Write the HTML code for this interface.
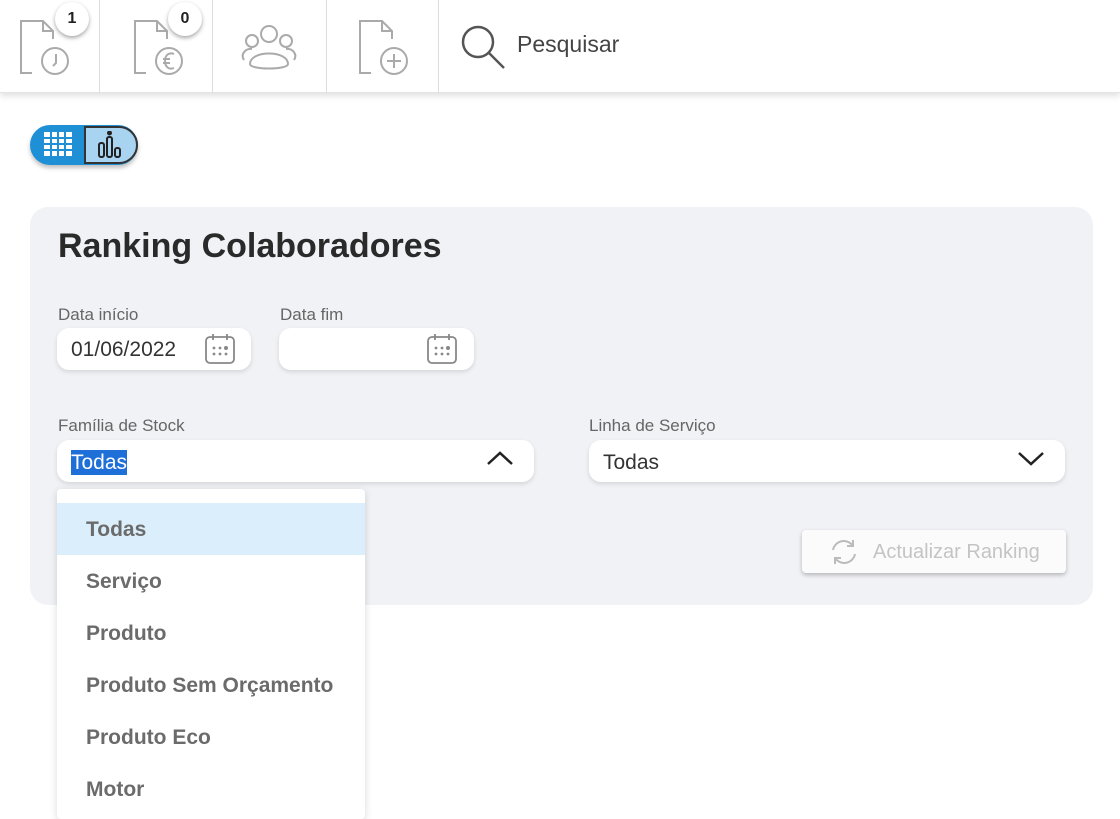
<!DOCTYPE html>
<html><head><meta charset="utf-8"><style>
*{box-sizing:border-box;margin:0;padding:0}
body{width:1120px;height:810px;overflow:hidden;background:#fff;font-family:"Liberation Sans",sans-serif;position:relative}
.hdr{position:absolute;left:0;top:0;width:1120px;height:93px;background:#fff;box-shadow:0 3px 6px rgba(0,0,0,.12);border-bottom:1px solid #e4e4e8}
.div{position:absolute;top:0;width:1px;height:93px;background:#ddd}
.badge{position:absolute;width:34px;height:34px;border-radius:50%;background:#fff;box-shadow:0 2px 4px rgba(0,0,0,.35);font-weight:bold;font-size:16px;text-align:center;line-height:34px;color:#222}
.abs{position:absolute}
.card{position:absolute;left:30px;top:207px;width:1063px;height:398px;background:#f1f2f6;border-radius:18px}
.lbl{position:absolute;font-size:17px;color:#666}
.inp{position:absolute;background:#fff;border-radius:12px;box-shadow:0 2px 5px rgba(0,0,0,.12)}
.dd{position:absolute;left:57px;top:489px;width:308px;height:330px;background:#fff;box-shadow:0 2px 8px rgba(0,0,0,.15);border-radius:4px}
.it{height:52px;line-height:54px;padding-left:29px;font-size:21px;font-weight:bold;color:#6b6b6b}
</style></head><body>
<div class="hdr">
 <div class="div" style="left:99px"></div><div class="div" style="left:212px"></div><div class="div" style="left:326px"></div><div class="div" style="left:438px"></div>
 <svg class="abs" style="left:18px;top:18px" width="60" height="60" fill="none" stroke="#aaa" stroke-width="2">
  <path d="M14 55H3V3h22l10 10v8"/><path d="M25 3v10h10"/><circle cx="37" cy="43" r="13"/><path d="M38 36v9l-3 3"/></svg>
 <div class="badge" style="left:55px;top:2px">1</div>
 <svg class="abs" style="left:132px;top:18px" width="60" height="60" fill="none" stroke="#aaa" stroke-width="2">
  <path d="M14 55H3V3h22l10 10v8"/><path d="M25 3v10h10"/><circle cx="37" cy="43" r="13"/><path d="M42 36c-5-2-9 1-9 7s4 9 9 7M31 41h7M31 45h7"/></svg>
 <div class="badge" style="left:168px;top:2px">0</div>
 <svg class="abs" style="left:238px;top:22px" width="62" height="50" fill="none" stroke="#aaa" stroke-width="2">
  <circle cx="31" cy="12" r="8"/><circle cx="14" cy="19" r="6"/><circle cx="48" cy="19" r="6"/><path d="M12 42c0-14 38-14 38 0c0 6-38 6-38 0z"/><path d="M6 38c-4-6 2-12 8-11M56 38c4-6-2-12-8-11"/></svg>
 <svg class="abs" style="left:357px;top:18px" width="60" height="60" fill="none" stroke="#aaa" stroke-width="2">
  <path d="M14 55H3V3h22l10 10v8"/><path d="M25 3v10h10"/><circle cx="37" cy="43" r="13"/><path d="M37 36v14M30 43h14"/></svg>
 <svg class="abs" style="left:458px;top:22px" width="50" height="50" fill="none" stroke="#555" stroke-width="2.5"><circle cx="20" cy="20" r="15"/><path d="M31 31l15 15"/></svg>
 <div class="abs" style="left:517px;top:31px;font-size:23px;color:#444">Pesquisar</div>
</div>
<div class="abs" style="left:30px;top:125px;width:108px;height:40px;border-radius:20px;background:#1f8fd6;box-shadow:0 3px 4px rgba(0,0,0,.25)"></div>
<div class="abs" style="left:84px;top:126px;width:54px;height:38px;border-radius:0 19px 19px 0;background:#a8d4f2;border:2px solid #333"></div>
<svg class="abs" style="left:43px;top:131px" width="30" height="26"><rect x="1" y="1" width="28" height="24" fill="#fff"/><g stroke="#1f8fd6" stroke-width="2"><path d="M1 7h28M1 13h28M1 19h28M8 1v24M15 1v24M22 1v24"/></g></svg>
<svg class="abs" style="left:96px;top:131px" width="28" height="28" fill="none" stroke="#222" stroke-width="2"><rect x="3" y="12" width="5" height="14" rx="2"/><rect x="11" y="6" width="5" height="20" rx="2"/><rect x="19" y="17" width="5" height="9" rx="2"/><circle cx="13.5" cy="2" r="1.5" fill="#222"/></svg>
<div class="card"></div>
<div class="abs" style="left:58px;top:227px;font-size:34px;font-weight:bold;color:#2a2a2a">Ranking Colaboradores</div>
<div class="lbl" style="left:58px;top:305px">Data início</div>
<div class="lbl" style="left:280px;top:305px">Data fim</div>
<div class="inp" style="left:57px;top:328px;width:194px;height:42px"></div>
<div class="abs" style="left:71px;top:338px;font-size:21px;color:#333">01/06/2022</div>
<div class="inp" style="left:279px;top:328px;width:195px;height:42px"></div>
<svg class="abs" style="left:204px;top:333px" width="32" height="32" fill="none" stroke="#888" stroke-width="1.8"><rect x="2" y="4" width="28" height="26" rx="4"/><path d="M9 1v6M23 1v6"/><g fill="#888" stroke="none"><circle cx="10" cy="15" r="1.4"/><circle cx="16" cy="15" r="1.4"/><circle cx="22" cy="15" r="2"/><circle cx="10" cy="21" r="1.4"/><circle cx="16" cy="21" r="1.4"/><circle cx="22" cy="21" r="1.4"/></g></svg>
<svg class="abs" style="left:426px;top:333px" width="32" height="32" fill="none" stroke="#888" stroke-width="1.8"><rect x="2" y="4" width="28" height="26" rx="4"/><path d="M9 1v6M23 1v6"/><g fill="#888" stroke="none"><circle cx="10" cy="15" r="1.4"/><circle cx="16" cy="15" r="1.4"/><circle cx="22" cy="15" r="2"/><circle cx="10" cy="21" r="1.4"/><circle cx="16" cy="21" r="1.4"/><circle cx="22" cy="21" r="1.4"/></g></svg>
<div class="lbl" style="left:58px;top:416px">Família de Stock</div>
<div class="lbl" style="left:589px;top:416px">Linha de Serviço</div>
<div class="inp" style="left:57px;top:440px;width:477px;height:42px"></div>
<div class="abs" style="left:71px;top:450px;font-size:21px;color:#fff;background:#1e6fd8;line-height:25px;height:25px">Todas</div>
<svg class="abs" style="left:486px;top:449px" width="28" height="20" fill="none" stroke="#222" stroke-width="2.5"><path d="M2 15L14 4l12 11"/></svg>
<div class="inp" style="left:589px;top:440px;width:476px;height:42px"></div>
<div class="abs" style="left:603px;top:451px;font-size:21px;color:#333">Todas</div>
<svg class="abs" style="left:1017px;top:449px" width="28" height="20" fill="none" stroke="#222" stroke-width="2.5"><path d="M2 4l12 11L26 4"/></svg>
<div class="abs" style="left:802px;top:530px;width:264px;height:43px;background:#fbfbfb;border-radius:4px;box-shadow:0 2px 4px rgba(0,0,0,.25)"></div>
<svg class="abs" style="left:829px;top:538px" width="30" height="28" fill="none" stroke="#bbb" stroke-width="2"><path d="M4 12a11 11 0 0 1 20-4M26 16a11 11 0 0 1-20 4M24 2v6h-6M6 26v-6h6"/></svg>
<div class="abs" style="left:873px;top:541px;font-size:20px;color:#c4c4c4">Actualizar Ranking</div>
<div class="dd"><div style="height:14px"></div>
<div class="it" style="background:#dbeefb">Todas</div>
<div class="it">Serviço</div><div class="it">Produto</div><div class="it">Produto Sem Orçamento</div><div class="it">Produto Eco</div><div class="it">Motor</div>
</div>
</body></html>
